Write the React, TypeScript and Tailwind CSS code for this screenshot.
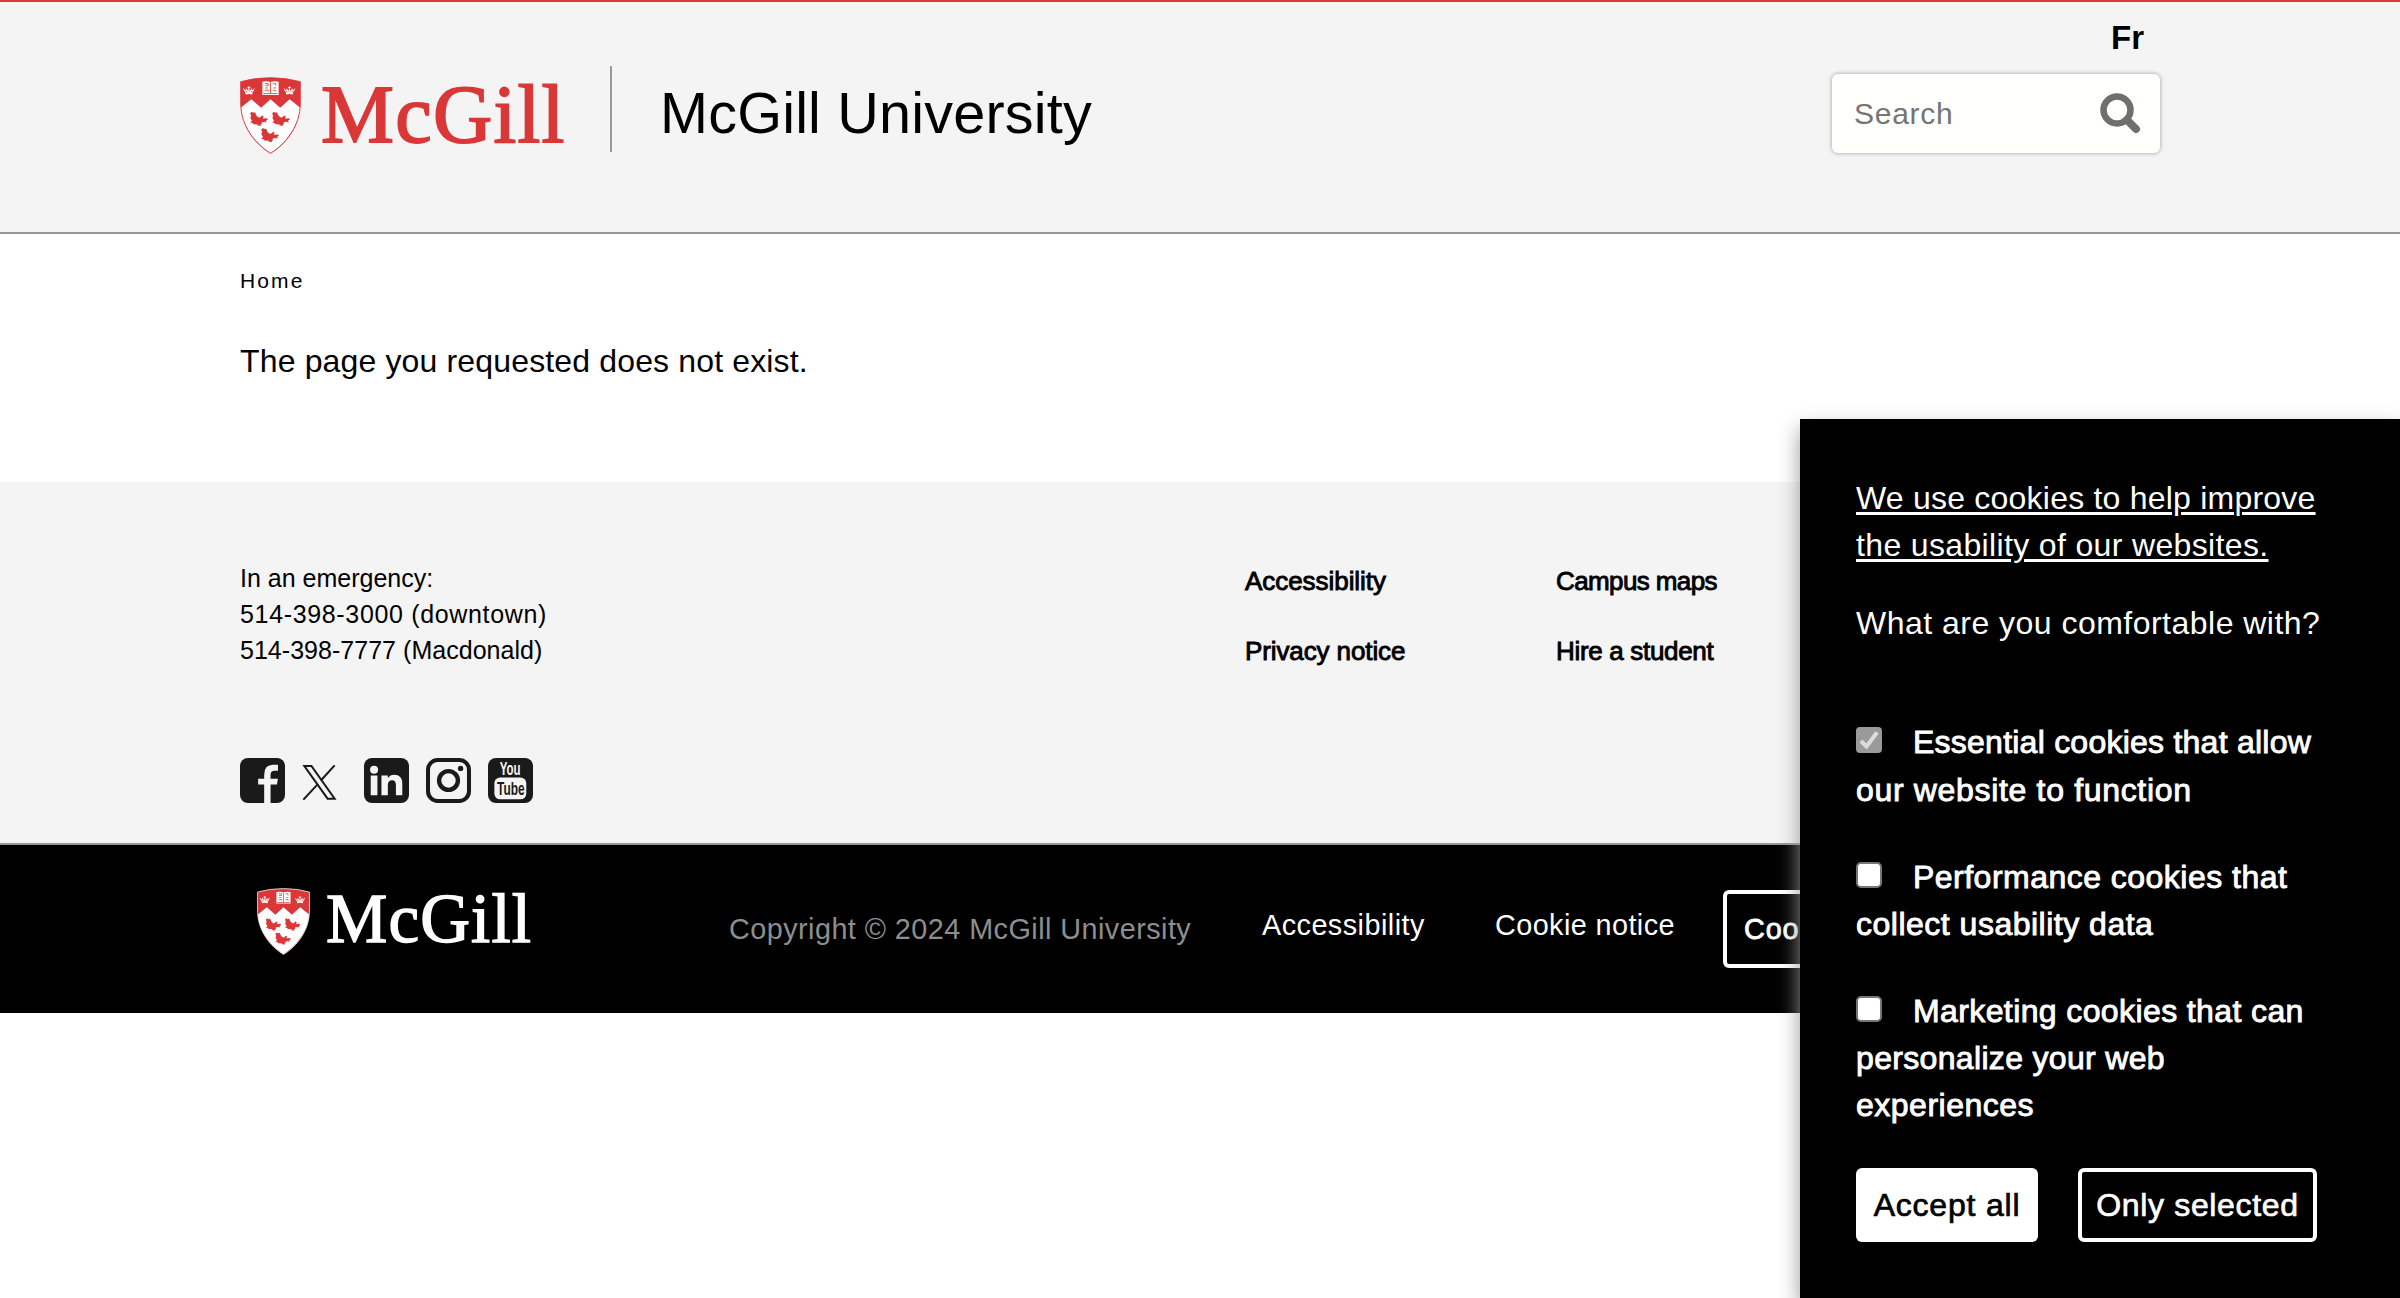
import React from "react";

const BIRD =
  "M2 6L7 1L12 4L17 2L23 14L31 19L40 12L44 15L41 21L54 20L57 25L51 27L53 33L46 31L37 33L39 38L34 38L37 43L24 42L26 39L13 38L8 34L2 34L8 28L3 20L5 11Z";

function Crown({ x }: { x: number }) {
  return (
    <g transform={`translate(${x} 40)`} fill="none" stroke="#fff" strokeWidth="3">
      <path d="M0 8L7 20M33 8L26 20M8 8L12 19M25 8L21 19M16.500 1V19M12 5H21M3 15L10 13L16.500 17L23 13L30 15M6 20Q16.500 17 27 20" />
      <path d="M6 24Q16.500 20 27 24" strokeWidth="4.500" />
    </g>
  );
}

function Shield({ className, edge }: { className: string; edge: string }) {
  const outline =
    "M19 27Q62 15 111 15Q160 15 203 27V92C203 160 158 216 111 243C64 216 19 160 19 92Z";
  return (
    <svg viewBox="17 13 188 232" className={className} preserveAspectRatio="none">
      <path d={outline} fill="#da3738" />
      <path
        d="M20 105L52 80L82 106L111 80L141 106L170 80L202 105C197 165 155 215 111 242C67 215 25 165 20 105Z"
        fill="#fff"
      />
      <path d={outline} fill="none" stroke={edge} strokeWidth="2.500" />
      <Crown x={28} />
      <Crown x={153} />
      <path d="M86 27Q98 24 111 28Q124 24 136 27V67H86Z" fill="#fff" />
      <path
        d="M111 29V62M89 63H133M94 33H104V39H95M95 46H103M94 53H104V57M118 33H127V39M120 46H128M118 53H127V57"
        stroke="#da3738"
        strokeWidth="2.500"
        fill="none"
      />
      <path d={BIRD} transform="translate(46 117)" fill="#da3738" />
      <path d={BIRD} transform="translate(114 117)" fill="#da3738" />
      <path d={BIRD} transform="translate(80 166)" fill="#da3738" />
    </svg>
  );
}

function Facebook() {
  return (
    <svg viewBox="0 0 134 134" className="h-[45px] w-[45px]">
      <rect width="134" height="134" rx="24" fill="#1a1a1a" />
      <path
        d="M72 134V79H54V62H72V50Q72 20 98 20H113V38H103Q91 38 91 50V62H113L110 79H91V134Z"
        fill="#f4f4f4"
      />
    </svg>
  );
}

function XLogo() {
  return (
    <svg viewBox="0 0 102 104" className="mt-[7px] ml-[17px] h-[35px] w-[35px]">
      <g fill="none" stroke="#1a1a1a" strokeWidth="6">
        <path d="M6 3H27L96 100H75Z" />
        <path d="M96 1L55 46M46 57L3 103" />
      </g>
    </svg>
  );
}

function LinkedIn() {
  return (
    <svg viewBox="0 0 134 134" className="ml-[27px] h-[45px] w-[45px]">
      <rect width="134" height="134" rx="24" fill="#1a1a1a" />
      <circle cx="30" cy="35" r="12" fill="#f4f4f4" />
      <path
        d="M20 52H40V111H20ZM52 52H71V60Q78 50 90 50Q114 50 114 76V111H95V80Q95 66 84 66Q71 66 71 80V111H52Z"
        fill="#f4f4f4"
      />
    </svg>
  );
}

function Instagram() {
  return (
    <svg viewBox="0 0 134 134" className="ml-[17px] h-[45px] w-[45px]">
      <rect x="6" y="6" width="122" height="122" rx="29" fill="none" stroke="#1a1a1a" strokeWidth="12" />
      <circle cx="67" cy="67" r="28" fill="none" stroke="#1a1a1a" strokeWidth="13" />
      <circle cx="103" cy="31" r="8" fill="#1a1a1a" />
    </svg>
  );
}

function YouTube() {
  return (
    <svg viewBox="0 0 134 134" className="ml-[17px] h-[45px] w-[45px] font-['Liberation_Sans',sans-serif] font-bold">
      <rect width="134" height="134" rx="24" fill="#1a1a1a" />
      <rect x="19" y="58" width="95" height="65" rx="17" fill="#f4f4f4" />
      <text x="35" y="51" fontSize="56" textLength="62" lengthAdjust="spacingAndGlyphs" fill="#f4f4f4">
        You
      </text>
      <text x="27" y="111" fontSize="54" textLength="82" lengthAdjust="spacingAndGlyphs" fill="#1a1a1a">
        Tube
      </text>
    </svg>
  );
}

function CheckBox({ checked }: { checked?: boolean }) {
  return checked ? (
    <span className="mt-[9px] mr-[31px] flex h-[26px] w-[26px] items-center justify-center rounded-[4px] bg-[#9a9a9a]">
      <svg viewBox="0 0 26 26" className="h-[26px] w-[26px]">
        <path d="M5 14L10.500 19.500L21 5.500" fill="none" stroke="#dcdcdc" strokeWidth="4" />
      </svg>
    </span>
  ) : (
    <span className="mt-[8px] mr-[31px] h-[26px] w-[26px] rounded-[5px] border-2 border-[#767676] bg-white" />
  );
}

export default function App() {
  return (
    <div className="relative h-[1298px] overflow-hidden bg-white font-['Liberation_Sans',Arial,sans-serif] whitespace-nowrap text-black">
      <header className="h-[234px] border-t-2 border-b-2 border-t-[#e0383a] border-b-[#979797] bg-[#f4f4f4]">
        <div className="mx-auto flex w-[1920px] items-start">
          <Shield className="mt-[75px] h-[77px] w-[61px]" edge="#da3738" />
          <div className="mt-[70px] ml-[20px] w-[289px] font-['Liberation_Serif',serif] text-[82px] leading-[86px] tracking-[1.300px] text-[#da3738] [-webkit-text-stroke:1.8px_#da3738]">
            McGill
          </div>
          <div className="mt-[64px] h-[86px] w-[2px] bg-[#979797]" />
          <h1 className="mt-[68px] ml-[48px] text-[57.600px] leading-[86px] tracking-[0.190px]">McGill University</h1>
          <div className="ml-auto w-[329px]">
            <div className="mt-[16px] pr-[16px] text-right text-[33px] leading-[40px] font-bold">Fr</div>
            <div className="mt-[16px] ml-[1px] flex h-[79px] w-[328px] items-center justify-between rounded-[6px] bg-[#fffffc] pr-[19px] pl-[22px] shadow-[0_0_4px_#999]">
              <span className="text-[30px] tracking-[0.730px] text-[#757575]">Search</span>
              <svg viewBox="0 0 42 42" className="mb-[2px] h-[42px] w-[42px]">
                <circle cx="18" cy="18" r="13.500" fill="none" stroke="#6f6f6f" strokeWidth="6.500" />
                <path d="M28 28L37 37" stroke="#6f6f6f" strokeWidth="8" strokeLinecap="round" />
              </svg>
            </div>
          </div>
        </div>
      </header>

      <main className="mx-auto h-[248px] w-[1920px] pt-[32px]">
        <div className="text-[21px] leading-[30px] tracking-[2.100px]">Home</div>
        <p className="mt-[41px] text-[32px] leading-[48px] tracking-[0.150px]">
          The page you requested does not exist.
        </p>
      </main>

      <section className="h-[363px] border-b-2 border-[#979797] bg-[#f4f4f4]">
        <div className="mx-auto flex w-[1920px] items-start pt-[78px]">
          <div className="w-[1005px]">
            <div className="text-[25px] leading-[36px]">
              <div>In an emergency:</div>
              <div className="tracking-[0.660px]">514-398-3000 (downtown)</div>
              <div className="tracking-[0.030px]">514-398-7777 (Macdonald)</div>
            </div>
            <div className="mt-[90px] flex items-start">
              <Facebook />
              <XLogo />
              <LinkedIn />
              <Instagram />
              <YouTube />
            </div>
          </div>
          <div className="mt-[3px] grid grid-cols-[311px_310px] gap-y-[34px] text-[26px] leading-[36px] [-webkit-text-stroke:0.9px_black]">
            <span className="tracking-[-0.050px]">Accessibility</span>
            <span className="tracking-[-0.610px]">Campus maps</span>
            <span className="tracking-[-0.110px]">Privacy notice</span>
            <span className="tracking-[-0.320px]">Hire a student</span>
          </div>
        </div>
      </section>

      <footer className="h-[168px] bg-black">
        <div className="mx-auto flex w-[1920px] items-start text-[28.800px] leading-[40px] text-white">
          <div className="ml-[17px] flex w-[472px] items-start">
            <Shield className="mt-[43px] h-[67px] w-[53px]" edge="#ffffff" />
            <span className="mt-[37px] ml-[16px] font-['Liberation_Serif',serif] text-[69px] leading-[74px] tracking-[1.100px] [-webkit-text-stroke:1.4px_white]">
              McGill
            </span>
          </div>
          <span className="mt-[64px] w-[533px] tracking-[0.450px] text-[#8e8e8e]">
            Copyright © 2024 McGill University
          </span>
          <span className="mt-[60px] w-[233px] tracking-[0.460px]">Accessibility</span>
          <span className="mt-[60px] w-[228px] tracking-[0.420px]">Cookie notice</span>
          <span className="mt-[45px] flex h-[78px] shrink-0 items-center rounded-[6px] border-4 border-white px-[17px] tracking-[0.900px] [-webkit-text-stroke:0.8px_white]">
            Cookie settings
          </span>
        </div>
      </footer>

      <aside className="absolute top-[419px] right-0 bottom-0 w-[600px] bg-black px-[56px] pt-[56px] text-[32px] leading-[47px] text-white shadow-[0_10px_20px_#999]">
        <div className="underline decoration-[3px] underline-offset-[3px]">
          <div className="tracking-[0.220px]">We use cookies to help improve</div>
          <div className="tracking-[0.350px]">the usability of our websites.</div>
        </div>
        <p className="mt-[31px] tracking-[0.480px]">What are you comfortable with?</p>

        <div className="[-webkit-text-stroke:0.9px_white]">
          <div className="mt-[71px] leading-[48px]">
            <div className="flex items-start">
              <CheckBox checked />
              <span className="tracking-[0.240px]">Essential cookies that allow</span>
            </div>
            <div className="tracking-[0.670px]">our website to function</div>
          </div>
          <div className="mt-[40px]">
            <div className="flex items-start">
              <CheckBox />
              <span className="tracking-[0.480px]">Performance cookies that</span>
            </div>
            <div className="tracking-[0.500px]">collect usability data</div>
          </div>
          <div className="mt-[40px]">
            <div className="flex items-start">
              <CheckBox />
              <span className="tracking-[0.390px]">Marketing cookies that can</span>
            </div>
            <div className="tracking-[0.330px]">personalize your web</div>
            <div className="tracking-[0.500px]">experiences</div>
          </div>
        </div>

        <div className="mt-[39px] flex gap-10">
          <button className="h-[74px] w-[182px] rounded-[6px] bg-white pt-[1px] tracking-[0.800px] text-black [-webkit-text-stroke:0.7px_black]">
            Accept all
          </button>
          <button className="h-[74px] w-[239px] rounded-[6px] border-4 border-white pt-[1px] tracking-[0.650px] [-webkit-text-stroke:0.7px_white]">
            Only selected
          </button>
        </div>
      </aside>
    </div>
  );
}
